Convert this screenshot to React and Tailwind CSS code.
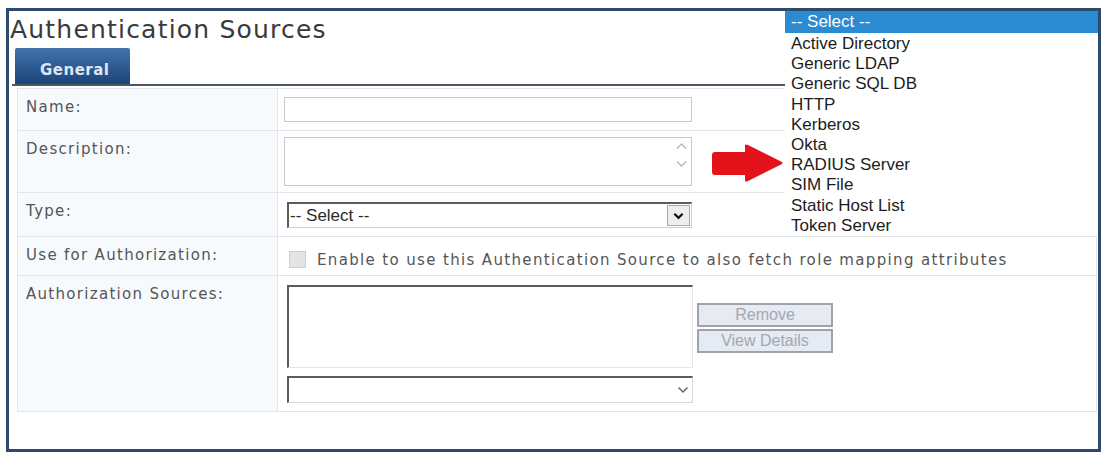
import React from 'react'

const typeOptions = [
  'Active Directory',
  'Generic LDAP',
  'Generic SQL DB',
  'HTTP',
  'Kerberos',
  'Okta',
  'RADIUS Server',
  'SIM File',
  'Static Host List',
  'Token Server'
]

const Label = ({ children }) => (
  <div className="w-[260px] shrink-0 bg-[#f7fafc] border-r border-[#e2e6ea] pl-[8px] pt-[8px] text-[15px] leading-[20px] tracking-[1.3px] text-[#555]">
    {children}
  </div>
)

const Chevron = ({ className, strokeWidth = 2 }) => (
  <svg viewBox="0 0 12 8" className={className} fill="none" stroke="currentColor" strokeWidth={strokeWidth}>
    <polyline points="1.5,1.5 6,6 10.5,1.5" />
  </svg>
)

const App = () => {
  return (
    <div className="relative w-[1106px] h-[454px] bg-white pt-[8px] pl-[6px] font-['DejaVu_Sans',sans-serif]">
      <div className="relative w-[1095px] h-[444px] border-[3px] border-[#2d4a6c] bg-white">
        {/* Page title */}
        <div className="h-[37px] pt-[4px] pl-[1px] text-[25px] leading-[30px] tracking-[1.2px] text-[#3a3a3a]">
          Authentication Sources
        </div>

        {/* Tabs */}
        <div className="ml-[6px] w-[115px] h-[36px] rounded-t-[2px] bg-gradient-to-b from-[#4273ae] to-[#1c4479] pl-[25px] pt-[13px] text-[15px] leading-[18px] tracking-[0.5px] font-bold text-[#dbe7f4]">
          General
        </div>
        <div className="ml-[3px] h-[2px] bg-[#4f5862]" />

        {/* Form */}
        <div className="mt-[2px] ml-[8px] w-[1080px] border border-[#e2e6ea] text-[#555]">
          <div className="flex h-[42px] border-b border-[#e2e6ea]">
            <Label>Name:</Label>
            <div className="pl-[6px] pt-[8px]">
              <div className="w-[408px] h-[25px] border border-[#c8c8c8] bg-white" />
            </div>
          </div>

          <div className="flex h-[62px] border-b border-[#e2e6ea]">
            <Label>Description:</Label>
            <div className="pl-[6px] pt-[6px]">
              <div className="relative w-[408px] h-[49px] border border-[#c8c8c8] bg-white">
                <div className="absolute right-[3px] top-[4px] flex flex-col gap-[10px] text-[#b5b5b5]">
                  <Chevron className="w-[13px] h-[8px] rotate-180" strokeWidth={1.3} />
                  <Chevron className="w-[13px] h-[8px]" strokeWidth={1.3} />
                </div>
              </div>
            </div>
          </div>

          <div className="flex h-[44px] border-b border-[#e2e6ea]">
            <Label>Type:</Label>
            <div className="pl-[9px] pt-[9px]">
              <div className="flex items-center justify-between w-[405px] h-[26px] border-t-2 border-l-2 border-r border-b border-t-[#5b5b5b] border-l-[#5b5b5b] border-r-[#cfcfcf] border-b-[#cfcfcf] bg-white pl-[1px] pr-[1px]">
                <span className="font-['Liberation_Sans',sans-serif] text-[17px] leading-[20px] text-[#2a2a2a]">-- Select --</span>
                <span className="flex items-center justify-center w-[23px] h-[21px] border border-[#a9a9a9] bg-[#eeeeee] text-[#111]">
                  <Chevron className="w-[11px] h-[8px]" strokeWidth={2.4} />
                </span>
              </div>
            </div>
          </div>

          <div className="flex h-[39px] border-b border-[#e2e6ea]">
            <Label>Use for Authorization:</Label>
            <div className="flex items-start gap-[11px] pl-[11px] pt-[14px]">
              <div className="w-[17px] h-[17px] border border-[#cdcdcd] bg-[#e4e4e4]" />
              <span className="text-[15px] leading-[18px] tracking-[1.35px] text-[#555]">
                Enable to use this Authentication Source to also fetch role mapping attributes
              </span>
            </div>
          </div>

          <div className="flex h-[135px]">
            <Label>Authorization Sources:</Label>
            <div className="flex pl-[9px] pt-[9px]">
              <div className="flex flex-col gap-[8px]">
                <div className="w-[406px] h-[83px] border-t-2 border-l-2 border-t-[#5b5b5b] border-l-[#5b5b5b] border-r border-b border-r-[#e6e6e6] border-b-[#e6e6e6] bg-white" />
                <div className="flex items-center justify-end w-[406px] h-[27px] border-t-2 border-l-2 border-t-[#5b5b5b] border-l-[#5b5b5b] border-r border-b border-r-[#d6d6d6] border-b-[#d6d6d6] bg-white pr-[3px] text-[#666]">
                  <Chevron className="w-[12px] h-[8px]" strokeWidth={1.5} />
                </div>
              </div>
              <div className="ml-[4px] mt-[18px] flex flex-col gap-[2px] font-['Liberation_Sans',sans-serif] text-[16px] leading-[20px] text-[#a3a8b0]">
                <div className="w-[136px] h-[24px] border-2 border-[#9fa3a9] bg-[#e5eaf3] text-center">Remove</div>
                <div className="w-[136px] h-[24px] border-2 border-[#9fa3a9] bg-[#e5eaf3] text-center">View Details</div>
              </div>
            </div>
          </div>
        </div>

        {/* Open type list */}
        <div className="absolute top-0 right-0 w-[313px] bg-white font-['Liberation_Sans',sans-serif] text-[17px] leading-[20.2px] text-[#1c1c1c]">
          <div className="h-[22px] bg-[#2a8ad2] pl-[6px] text-white leading-[22px]">-- Select --</div>
          <div className="pt-[1px]">
            {typeOptions.map((opt) => (
              <div key={opt} className="pl-[6px]">{opt}</div>
            ))}
          </div>
        </div>
      </div>

      {/* Pointer arrow */}
      <svg className="absolute left-[710px] top-[143px]" width="74" height="41" viewBox="0 0 74 41">
        <rect x="2" y="9" width="36" height="23" rx="3" fill="#e4131b" />
        <path d="M35 2 Q36 1 38 2 L72 19 Q73 20 72 21 L38 38 Q36 39 35 38 Z" fill="#e4131b" />
      </svg>
    </div>
  )
}

export default App
